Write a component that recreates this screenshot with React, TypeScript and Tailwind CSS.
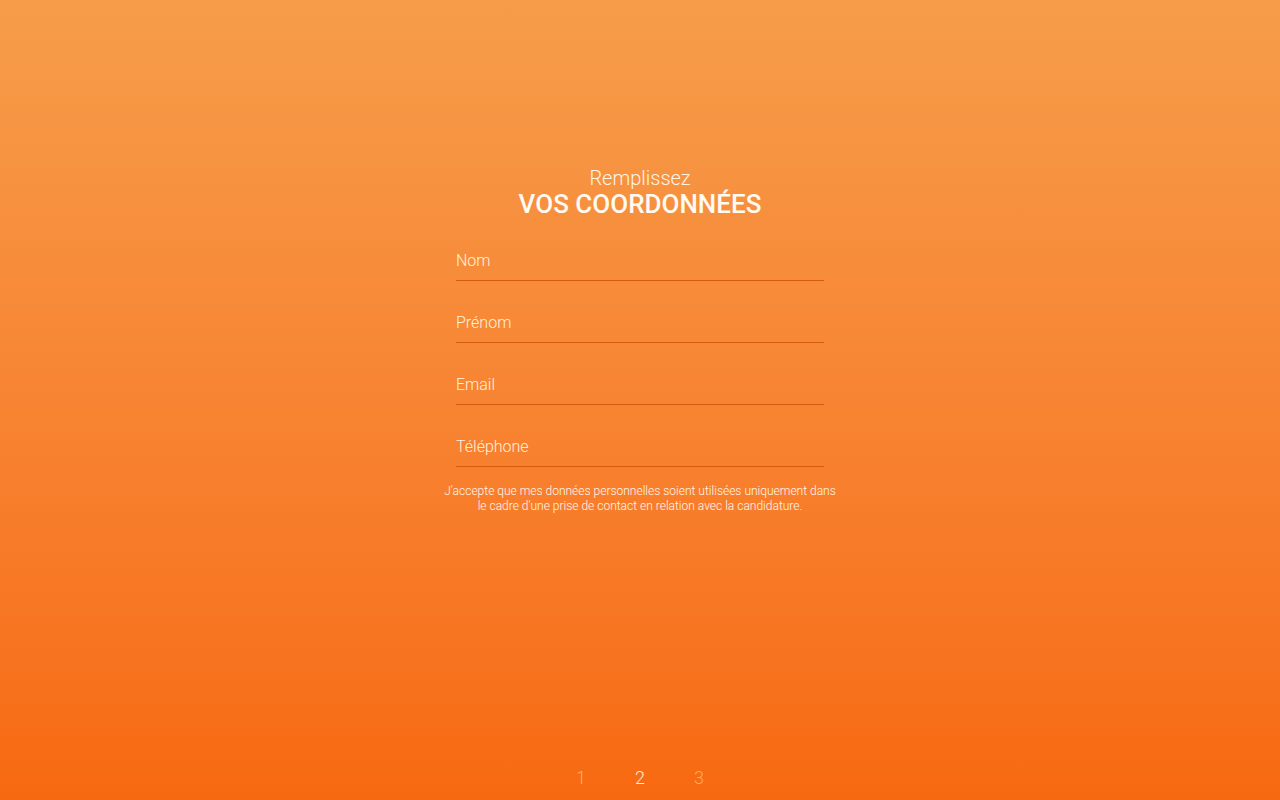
const fields = ["Nom", "Prénom", "Email", "Téléphone"];

export default function App() {
  return (
    <div
      className="w-full h-[800px] flex flex-col items-center bg-gradient-to-b from-[#f69d4a] to-[#f7690f] text-white"
      style={{ fontFamily: "Roboto, 'Noto Sans', sans-serif" }}
    >
      <div className="pt-[164px] flex flex-col items-center">
        <p className="text-[20px] font-light leading-[28px] text-[#fff4e4]">Remplissez</p>
        <h1 className="text-[26px] font-medium leading-[24px] text-[#fffaf2]">VOS COORDONNÉES</h1>
      </div>

      <form className="w-[368px] mt-[3px] flex flex-col">
        {fields.map((label) => (
          <div key={label} className="h-[62px] flex flex-col justify-end">
            <input
              placeholder={label}
              className="w-full bg-transparent outline-none text-[16px] font-light leading-[20px] pb-[9px] border-b border-[#d65d0e] placeholder:text-[#fff3dc] text-[#fff3dc]"
            />
          </div>
        ))}
      </form>

      <p className="w-[400px] mt-[17px] text-center text-[12px] leading-[15px] font-light text-[#fff8ec]">
        J'accepte que mes données personnelles soient utilisées uniquement dans le cadre d'une prise de contact en relation avec la candidature.
      </p>

      <div className="flex-1" />

      <nav className="flex gap-[40px] pb-[10px] text-[18px] font-light leading-[24px]">
        <span className="w-[19px] text-center text-[#fbb06c]">1</span>
        <span className="w-[19px] text-center text-[#fff0d6]">2</span>
        <span className="w-[19px] text-center text-[#fbab66]">3</span>
      </nav>
    </div>
  );
}
